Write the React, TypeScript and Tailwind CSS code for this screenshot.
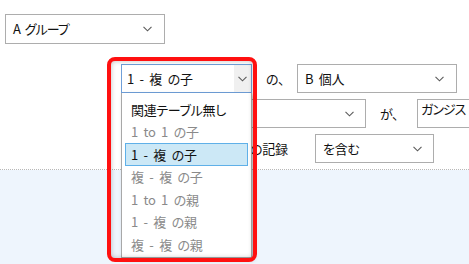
import React from "react";

const font = "font-['Meiryo_UI','Noto_Sans_CJK_JP',sans-serif] [font-feature-settings:'palt'] [word-spacing:3px] tracking-[-0.3px]";

function Chevron({ className = "" }: { className?: string }) {
  return (
    <svg width="9" height="6" viewBox="0 0 9 6" className={className}>
      <path d="M0.5 0.8 L4.5 4.8 L8.5 0.8" fill="none" stroke="#5a5a5a" strokeWidth="1.1" />
    </svg>
  );
}

function Select({ label, className = "", labelClass = "", chevronRight = 10 }: { label: string; className?: string; labelClass?: string; chevronRight?: number }) {
  return (
    <div className={`flex shrink-0 items-center justify-between border border-[#adadad] bg-white pl-[7px] ${className}`} style={{ paddingRight: chevronRight }}>
      <span className={`whitespace-nowrap text-[#111] ${labelClass}`}>{label}</span>
      <Chevron />
    </div>
  );
}

const items = [
  { t: "関連テーブル無し", dim: false },
  { t: "1 to 1 の子", dim: true },
  { t: "1 - 複 の子", dim: false, sel: true },
  { t: "複 - 複 の子", dim: true },
  { t: "1 to 1 の親", dim: true },
  { t: "1 - 複 の親", dim: true },
  { t: "複 - 複 の親", dim: true },
];

export default function App() {
  return (
    <div className={`relative w-[469px] h-[264px] overflow-hidden bg-white text-[13px] ${font}`}>
      <div className="h-[170px] border-b border-dotted border-[#b8b8b8] bg-white">
        <div className="pl-[5px] pt-[14px]">
          <Select label="A グループ" labelClass="tracking-[-1px]" className="w-[160px] h-[30px]" chevronRight={12} />
        </div>
        <div className="mt-[20px] flex items-center pl-[121px]">
          <div className="w-[130px] h-[29px] shrink-0" />
          <span className="ml-[15px] w-[31px] shrink-0 text-[#111]">の、</span>
          <Select label="B 個人" className="w-[160px] h-[29px]" chevronRight={12} />
        </div>
        <div className="mt-[6px] flex items-center pl-[121px]">
          <Select label="" className="w-[245px] h-[29px]" chevronRight={11} />
          <span className="ml-[14px] w-[37px] shrink-0 text-[#111]">が、</span>
          <div className="h-[29px] w-[70px] shrink-0 border border-[#adadad] bg-white pl-[3px] leading-[18px] tracking-[-1px] text-[#111] whitespace-nowrap">ガンジス</div>
        </div>
        <div className="mt-[6px] flex items-center pl-[250px]">
          <span className="w-[65px] shrink-0 text-[#111]">の記録</span>
          <Select label="を含む" className="w-[119px] h-[29px]" chevronRight={11} />
        </div>
      </div>
      <div className="h-[94px] bg-[#eef5fd]" />

      {/* open dropdown */}
      <div className="absolute left-[121px] top-[64px] w-[131px]">
        <div className="flex h-[29px] items-center justify-between border border-[#6f9fd8] bg-white pl-[5px]">
          <span className="whitespace-nowrap text-[#111]">1 - 複 の子</span>
          <div className="flex h-full w-[17px] items-center justify-center bg-[#f0f0f0]">
            <Chevron />
          </div>
        </div>
        <div className="h-[165px] border border-t-0 border-[#a8a8a8] bg-white pl-[3px] pr-[3px] pt-[5px] shadow-[2px_2px_4px_rgba(0,0,0,0.25)]">
          {items.map((it) => (
            <div
              key={it.t}
              className={`flex h-[22.5px] items-center whitespace-nowrap pl-[5px] ${
                it.sel ? "border border-[#5fb0e8] bg-[#cce8f6] text-[#111]" : "border border-transparent"
              } ${it.dim ? "text-[#8a8a8a]" : "text-[#111]"}`}
            >
              {it.t}
            </div>
          ))}
        </div>
      </div>

      {/* red annotation */}
      <div className="pointer-events-none absolute left-[107px] top-[57px] h-[205px] w-[150px] rounded-[8px] border-[4px] border-[#ff1010] shadow-[inset_0_0_5px_rgba(0,0,0,0.25)]" />
    </div>
  );
}
